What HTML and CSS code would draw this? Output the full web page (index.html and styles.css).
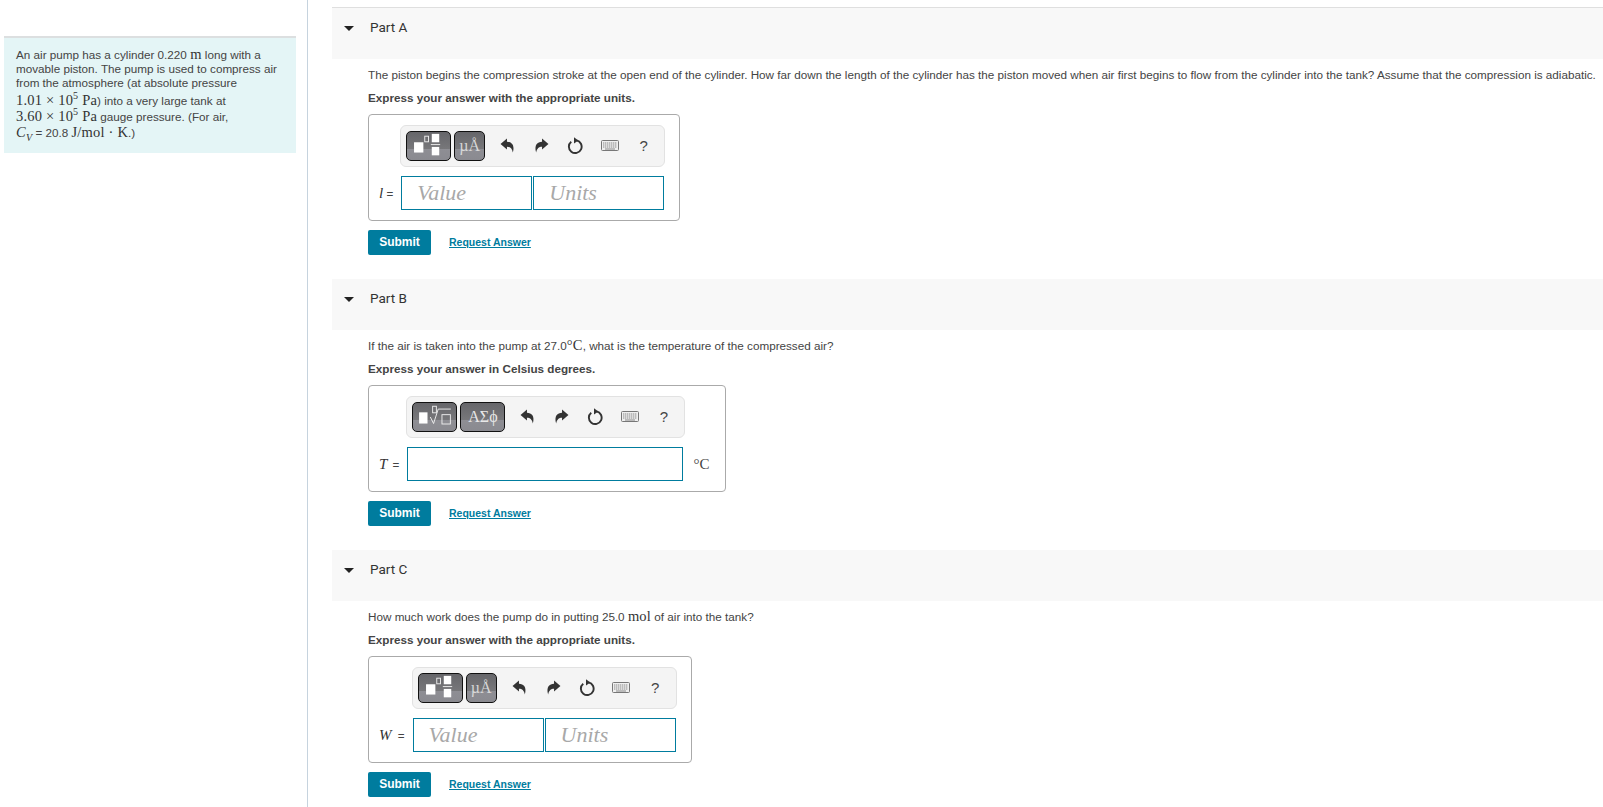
FILE: index.html
```html
<!DOCTYPE html>
<html lang="en">
<head>
    <meta charset="UTF-8">
    <meta name="viewport" content="width=device-width, initial-scale=1.0">
    <title>Air pump problem</title>
    <link rel="stylesheet" href="styles.css">
</head>
<body>
    <!-- shared toolbar icons -->
    <svg class="icon-defs" aria-hidden="true">
        <symbol id="icon-undo" viewBox="0 0 14 14">
            <path d="M0.5 5.5 L6.5 0.5 V3.4 C10.8 3.4 14 6.5 12 13.5 C11.2 9.8 9.5 8.2 6.5 8.2 V10.8 Z"/>
        </symbol>
        <symbol id="icon-redo" viewBox="0 0 14 14">
            <path d="M13.5 5.5 L7.5 0.5 V3.4 C3.2 3.4 0 6.5 2 13.5 C2.8 9.8 4.5 8.2 7.5 8.2 V10.8 Z"/>
        </symbol>
        <symbol id="icon-reset" viewBox="0 0 16 16">
            <path d="M9 3.2 A6 6 0 1 1 4 4.4" fill="none" stroke="#333" stroke-width="1.8"/>
            <path d="M6.6 0.2 L10.6 3.2 L6.6 6 Z"/>
        </symbol>
        <symbol id="icon-keyboard" viewBox="0 0 18 11">
            <rect x="0.5" y="0.5" width="17" height="10" rx="1" fill="#efefef" stroke="#777"/>
            <path d="M2 3 H16 M2 5 H16 M2 7 H16" stroke="#888" stroke-width="1" stroke-dasharray="1.4 0.6"/>
            <path d="M4 9 H14" stroke="#888" stroke-width="1"/>
        </symbol>
        <symbol id="icon-template-frac" viewBox="0 0 45 30">
            <rect x="7" y="11" width="10" height="11" fill="#fff"/>
            <rect x="18.5" y="4.5" width="4" height="6" fill="none" stroke="#eee"/>
            <rect x="26" y="2" width="8" height="9" fill="#fff"/>
            <rect x="25" y="13" width="10" height="1" fill="#eee"/>
            <rect x="26" y="16" width="8" height="9" fill="#fff"/>
        </symbol>
        <symbol id="icon-template-root" viewBox="0 0 45 30">
            <rect x="6" y="10" width="9" height="12" fill="#fff"/>
            <rect x="20.5" y="3.5" width="4" height="7" fill="none" stroke="#eee"/>
            <path d="M18 15 L21.5 22 L26.5 6.5 H40" fill="none" stroke="#eee"/>
            <rect x="30.5" y="12.5" width="9" height="10" fill="none" stroke="#eee"/>
        </symbol>
    </svg>

    <div class="page">
        <aside class="sidebar">
            <div class="intro">
                An air pump has a cylinder 0.220 <span class="math">m</span> long with a<br>
                movable piston. The pump is used to compress air<br>
                from the atmosphere (at absolute pressure<br>
                <span class="math-line"><span class="math">1.01 × 10<sup>5</sup> Pa</span>) into a very large tank at</span>
                <span class="math-line"><span class="math">3.60 × 10<sup>5</sup> Pa</span> gauge pressure. (For air,</span>
                <span class="math-line"><span class="math"><i>C<sub>V</sub></i></span> = 20.8 <span class="math">J/mol · K</span>.)</span>
            </div>
        </aside>

        <main class="parts">
            <section class="part">
                <div class="part-header"><span class="caret"></span><h2 class="part-title">Part A</h2></div>
                <div class="part-body">
                    <p class="question">The piston begins the compression stroke at the open end of the cylinder. How far down the length of the cylinder has the piston moved when air first begins to flow from the cylinder into the tank? Assume that the compression is adiabatic.</p>
                    <p class="instruction">Express your answer with the appropriate units.</p>
                    <div class="answer-box">
                        <div class="toolbar">
                            <button class="tool-btn"><svg class="tool-template"><use href="#icon-template-frac"/></svg></button>
                            <button class="tool-btn tool-btn-small">µÅ</button>
                            <span class="tool"><svg class="icon-arrow"><use href="#icon-undo"/></svg></span>
                            <span class="tool"><svg class="icon-arrow"><use href="#icon-redo"/></svg></span>
                            <span class="tool"><svg class="icon-reset"><use href="#icon-reset"/></svg></span>
                            <span class="tool"><svg class="icon-keyboard"><use href="#icon-keyboard"/></svg></span>
                            <span class="tool tool-help">?</span>
                        </div>
                        <label class="answer-label"><i class="var">l</i> =</label>
                        <div class="fields">
                            <div class="field"><span class="placeholder">Value</span></div>
                            <div class="field"><span class="placeholder">Units</span></div>
                        </div>
                    </div>
                    <div class="actions">
                        <button class="submit">Submit</button>
                        <a class="request" href="#">Request Answer</a>
                    </div>
                </div>
            </section>

            <section class="part">
                <div class="part-header"><span class="caret"></span><h2 class="part-title">Part B</h2></div>
                <div class="part-body">
                    <p class="question">If the air is taken into the pump at 27.0<span class="math">°C</span>, what is the temperature of the compressed air?</p>
                    <p class="instruction">Express your answer in Celsius degrees.</p>
                    <div class="answer-box answer-box-unit">
                        <div class="toolbar">
                            <button class="tool-btn"><svg class="tool-template"><use href="#icon-template-root"/></svg></button>
                            <button class="tool-btn tool-btn-greek">ΑΣϕ</button>
                            <span class="tool"><svg class="icon-arrow"><use href="#icon-undo"/></svg></span>
                            <span class="tool"><svg class="icon-arrow"><use href="#icon-redo"/></svg></span>
                            <span class="tool"><svg class="icon-reset"><use href="#icon-reset"/></svg></span>
                            <span class="tool"><svg class="icon-keyboard"><use href="#icon-keyboard"/></svg></span>
                            <span class="tool tool-help">?</span>
                        </div>
                        <label class="answer-label"><i class="var var-t">T</i> =</label>
                        <div class="fields">
                            <div class="field field-wide"></div>
                        </div>
                        <span class="unit">°C</span>
                    </div>
                    <div class="actions">
                        <button class="submit">Submit</button>
                        <a class="request" href="#">Request Answer</a>
                    </div>
                </div>
            </section>

            <section class="part">
                <div class="part-header"><span class="caret"></span><h2 class="part-title">Part C</h2></div>
                <div class="part-body">
                    <p class="question">How much work does the pump do in putting 25.0 <span class="math">mol</span> of air into the tank?</p>
                    <p class="instruction">Express your answer with the appropriate units.</p>
                    <div class="answer-box">
                        <div class="toolbar">
                            <button class="tool-btn"><svg class="tool-template"><use href="#icon-template-frac"/></svg></button>
                            <button class="tool-btn tool-btn-small">µÅ</button>
                            <span class="tool"><svg class="icon-arrow"><use href="#icon-undo"/></svg></span>
                            <span class="tool"><svg class="icon-arrow"><use href="#icon-redo"/></svg></span>
                            <span class="tool"><svg class="icon-reset"><use href="#icon-reset"/></svg></span>
                            <span class="tool"><svg class="icon-keyboard"><use href="#icon-keyboard"/></svg></span>
                            <span class="tool tool-help">?</span>
                        </div>
                        <label class="answer-label"><i class="var var-w">W</i> =</label>
                        <div class="fields">
                            <div class="field"><span class="placeholder">Value</span></div>
                            <div class="field"><span class="placeholder">Units</span></div>
                        </div>
                    </div>
                    <div class="actions">
                        <button class="submit">Submit</button>
                        <a class="request" href="#">Request Answer</a>
                    </div>
                </div>
            </section>
        </main>
    </div>
</body>
</html>
```
FILE: styles.css
```css
* {
    margin: 0;
    padding: 0;
    box-sizing: border-box;
}

html, body {
    height: 100%;
    overflow: hidden;
}

body {
    font-family: 'Liberation Sans', Arial, sans-serif;
    font-size: 11.7px;
    color: #444;
    background: white;
}

.icon-defs {
    display: none;
}

.page {
    display: flex;
    height: 100%;
}

.sidebar {
    flex: 0 0 308px;
    padding: 36px 11px 0 4px;
    border-right: 1px solid #c6d3de;
}

.intro {
    padding: 10px 12px 11px;
    background: #e4f5f6;
    border-top: 2px solid #dcdfe0;
    line-height: 14.2px;
}

.math {
    font-family: 'Liberation Serif', 'Times New Roman', serif;
    font-size: 14.5px;
    line-height: 0;
    letter-spacing: 0.2px;
    color: #333;
}

.math sup {
    font-size: 10px;
    line-height: 0;
}

.math sub {
    font-size: 10px;
    line-height: 0;
}

.math-line {
    display: block;
    line-height: 16.4px;
}

br + .math-line {
    margin-top: 2px;
}

.parts {
    flex: 1;
    min-width: 0;
    padding: 7px 0 0 24px;
}

.part {
    height: 271px;
}

.part-header {
    display: flex;
    align-items: flex-start;
    height: 52px;
    padding: 11px 0 0 12px;
    background: #f8f8f8;
    border-top: 1px solid #dfdfdf;
}

.part:not(:first-child) .part-header {
    border-top-color: white;
}

.caret {
    width: 0;
    height: 0;
    margin: 7px 16px 0 0;
    border-left: 5px solid transparent;
    border-right: 5px solid transparent;
    border-top: 5px solid #222;
}

.part-title {
    font-family: Roboto, 'Liberation Sans', sans-serif;
    font-size: 13.5px;
    font-weight: 400;
    line-height: 17px;
    color: #333;
}

.part-body {
    padding-left: 36px;
}

.question {
    margin-top: 8px;
    line-height: 16px;
    white-space: nowrap;
}

.instruction {
    margin-top: 7px;
    font-weight: bold;
    line-height: 16px;
}

.answer-box {
    display: inline-grid;
    grid-template-columns: auto auto;
    align-items: center;
    column-gap: 8px;
    row-gap: 9px;
    margin-top: 8px;
    padding: 10px 14px 10px 10px;
    border: 1px solid #aaa;
    border-radius: 4px;
    vertical-align: top;
}

.answer-box-unit {
    grid-template-columns: auto auto auto;
    padding-right: 16px;
}

.toolbar {
    grid-column: 2 / -1;
    display: flex;
    align-items: center;
    justify-self: start;
    gap: 3px;
    height: 42px;
    margin-left: -1px;
    padding: 0 5px;
    background: #f4f4f4;
    border: 1px solid #e2e2e2;
    border-radius: 6px;
}

.answer-box-unit .toolbar {
    width: 279px;
}

.tool-btn {
    flex: none;
    width: 45px;
    height: 30px;
    color: #e8e8e8;
    background: linear-gradient(#66666a 0%, #77777a 60%, #8e8e94 62%, #8a8a90 100%);
    border: 1px solid #111;
    border-radius: 5px;
    font-family: 'Liberation Serif', serif;
    font-size: 16px;
    line-height: 26px;
}

.tool-btn-small {
    width: 31px;
    font-size: 16px;
    color: #d8d8d8;
}

.tool-template {
    display: block;
    width: 43px;
    height: 28px;
}

.tool {
    flex: none;
    display: flex;
    justify-content: center;
    align-items: center;
    width: 31px;
    margin-bottom: 2px;
    fill: #333;
}

.tool:first-of-type {
    margin-left: 4px;
}

.icon-arrow {
    width: 15px;
    height: 15px;
}

.icon-reset {
    width: 17px;
    height: 17px;
}

.icon-keyboard {
    width: 18px;
    height: 11px;
}

.tool-help {
    font-size: 15px;
    color: #444;
}

.answer-label {
    font-family: 'Liberation Sans', sans-serif;
    color: #444;
    white-space: nowrap;
}

.var {
    font-family: 'Liberation Serif', serif;
    font-size: 15px;
    color: #333;
}

.var-t {
    margin-right: 2px;
}

.var-w {
    margin-right: 3px;
}

.fields {
    display: flex;
    gap: 1px;
}

.field {
    width: 131px;
    height: 34px;
    padding-left: 15px;
    border: 1px solid #007c9e;
    background: white;
}

.field-wide {
    width: 276px;
}

.placeholder {
    font-family: 'Liberation Serif', serif;
    font-size: 22px;
    font-style: italic;
    line-height: 31px;
    color: #a8a8a8;
}

.unit {
    font-family: 'Liberation Serif', serif;
    font-size: 15px;
    margin-left: 2px;
    color: #444;
}

.actions {
    display: flex;
    align-items: center;
    gap: 18px;
    margin-top: 9px;
}

.submit {
    width: 63px;
    height: 25px;
    padding-bottom: 2px;
    color: white;
    background: #007c9e;
    border: none;
    border-radius: 2px;
    font-family: 'Liberation Sans', sans-serif;
    font-size: 12px;
    font-weight: bold;
}

.request {
    margin-bottom: 2px;
    font-size: 10.5px;
    font-weight: bold;
    color: #007c9e;
}
```
